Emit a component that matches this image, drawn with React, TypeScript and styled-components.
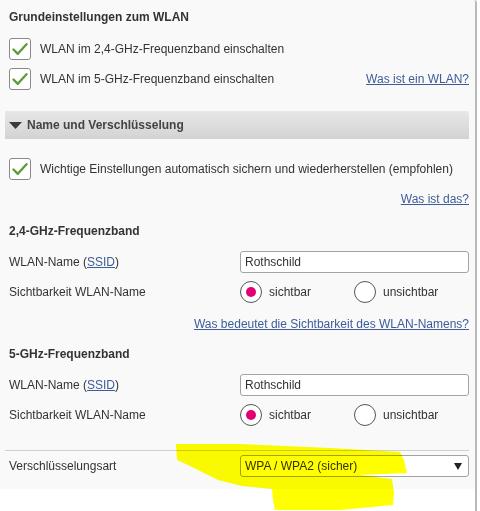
import React, { useState } from "react";
import styled, { createGlobalStyle } from "styled-components";

const GlobalStyle = createGlobalStyle`
  html, body {
    margin: 0;
    padding: 0;
    background: #ffffff;
  }
  body {
    font-family: "Liberation Sans", Arial, sans-serif;
    font-size: 12px;
    color: #333333;
  }
`;

const Page = styled.div`
  position: relative;
  width: 475px;
  height: 511px;
  border-right: 2px solid #b9b9b9;
  border-top-right-radius: 3px;
  overflow: hidden;
`;

const Panel = styled.div`
  background: #f9f9f9;
  padding: 0 6px 8px 5px;
  display: flex;
  flex-direction: column;
`;

const Title = styled.div`
  height: 34px;
  display: flex;
  align-items: center;
  padding-left: 4px;
  font-weight: bold;
`;

const CheckRow = styled.label<{ $top?: number }>`
  height: 30px;
  margin-top: ${({ $top }) => $top ?? 0}px;
  display: flex;
  align-items: center;
  padding-left: 4px;
  gap: 9px;
  cursor: pointer;
`;

const CheckBox = styled.span`
  width: 20px;
  height: 20px;
  border: 1px solid #8a8a8a;
  border-radius: 3px;
  background: #ffffff;
  display: flex;
  align-items: center;
  justify-content: center;
  flex-shrink: 0;
`;

const Spacer = styled.span`
  flex: 1;
`;

const Link = styled.a`
  color: #3d5c99;
  text-decoration: underline;
  cursor: pointer;
`;

const LinkRow = styled.div<{ $top?: number }>`
  height: 30px;
  margin-top: ${({ $top }) => $top ?? 0}px;
  display: flex;
  align-items: center;
  justify-content: flex-end;
`;

const SectionBar = styled.div`
  margin-top: 17px;
  height: 28px;
  display: flex;
  align-items: center;
  gap: 5px;
  padding-left: 4px;
  background: linear-gradient(#e7e7e7, #d3d3d3);
  border-top-right-radius: 3px;
  font-weight: bold;
  color: #444444;
`;

const SubHeading = styled.div<{ $top?: number }>`
  height: 30px;
  margin-top: ${({ $top }) => $top ?? 0}px;
  display: flex;
  align-items: center;
  padding-left: 4px;
  font-weight: bold;
`;

const FieldRow = styled.div<{ $top?: number }>`
  height: 30px;
  margin-top: ${({ $top }) => $top ?? 0}px;
  display: grid;
  grid-template-columns: 231px 1fr;
  align-items: center;
  padding-left: 4px;
`;

const TextInput = styled.input`
  box-sizing: border-box;
  width: 100%;
  height: 22px;
  border: 1px solid #a3a3a3;
  border-radius: 3px;
  background: #ffffff;
  padding: 0 4px;
  font-family: inherit;
  font-size: 12px;
  color: #333333;
  outline: none;
`;

const RadioGroup = styled.div`
  display: flex;
  align-items: center;
`;

const RadioOption = styled.label`
  width: 114px;
  display: flex;
  align-items: center;
  gap: 7px;
  cursor: pointer;
`;

const RadioCircle = styled.span<{ $checked: boolean }>`
  box-sizing: border-box;
  width: 22px;
  height: 22px;
  border: 1px solid #555555;
  border-radius: 50%;
  background: #ffffff;
  display: flex;
  align-items: center;
  justify-content: center;
  &::after {
    content: "";
    width: 10px;
    height: 10px;
    border-radius: 50%;
    background: ${({ $checked }) => ($checked ? "#e20074" : "transparent")};
  }
`;

const Separator = styled.div`
  margin-top: 20px;
  height: 1px;
  background: #cfcfcf;
`;

const SelectWrap = styled.div`
  position: relative;
  height: 22px;
`;

const Select = styled.select`
  box-sizing: border-box;
  width: 100%;
  height: 22px;
  appearance: none;
  border: 1px solid #a3a3a3;
  border-radius: 3px;
  background: #ffffff;
  padding: 0 4px;
  font-family: inherit;
  font-size: 12px;
  color: #333333;
  outline: none;
`;

const SelectArrow = styled.svg`
  position: absolute;
  right: 7px;
  top: 8px;
  pointer-events: none;
`;

const Highlighter = styled.svg`
  position: absolute;
  left: 0;
  top: 0;
  pointer-events: none;
  mix-blend-mode: multiply;
`;

const Check = () => (
  <svg width="16" height="14" viewBox="0 0 16 14">
    <path
      d="M1.5 7.5 L5.8 11.8 L14.5 2.2"
      fill="none"
      stroke="#5e9e3a"
      strokeWidth="2.4"
      strokeLinecap="round"
      strokeLinejoin="round"
    />
  </svg>
);

const Triangle = () => (
  <svg width="13" height="7" viewBox="0 0 13 7">
    <path d="M0 0 H13 L6.5 7 Z" fill="#3a3a3a" />
  </svg>
);

type Band = { title: string; ssid: string; top: number };

const BandBlock: React.FC<{ band: Band; withLink?: boolean }> = ({ band, withLink }) => {
  const [visible, setVisible] = useState(true);
  return (
    <>
      <SubHeading $top={band.top}>{band.title}</SubHeading>
      <FieldRow $top={1}>
        <span>
          WLAN-Name (<Link>SSID</Link>)
        </span>
        <TextInput defaultValue={band.ssid} />
      </FieldRow>
      <FieldRow>
        <span>Sichtbarkeit WLAN-Name</span>
        <RadioGroup>
          <RadioOption onClick={() => setVisible(true)}>
            <RadioCircle $checked={visible} />
            sichtbar
          </RadioOption>
          <RadioOption onClick={() => setVisible(false)}>
            <RadioCircle $checked={!visible} />
            unsichtbar
          </RadioOption>
        </RadioGroup>
      </FieldRow>
      {withLink && (
        <LinkRow $top={2}>
          <Link>Was bedeutet die Sichtbarkeit des WLAN-Namens?</Link>
        </LinkRow>
      )}
    </>
  );
};

export default function App() {
  return (
    <Page>
      <GlobalStyle />
      <Panel>
        <Title>Grundeinstellungen zum WLAN</Title>
        <CheckRow>
          <CheckBox>
            <Check />
          </CheckBox>
          WLAN im 2,4-GHz-Frequenzband einschalten
        </CheckRow>
        <CheckRow>
          <CheckBox>
            <Check />
          </CheckBox>
          WLAN im 5-GHz-Frequenzband einschalten
          <Spacer />
          <Link>Was ist ein WLAN?</Link>
        </CheckRow>

        <SectionBar>
          <Triangle />
          Name und Verschlüsselung
        </SectionBar>

        <CheckRow $top={15}>
          <CheckBox>
            <Check />
          </CheckBox>
          Wichtige Einstellungen automatisch sichern und wiederherstellen (empfohlen)
        </CheckRow>
        <LinkRow>
          <Link>Was ist das?</Link>
        </LinkRow>

        <BandBlock band={{ title: "2,4-GHz-Frequenzband", ssid: "Rothschild", top: 2 }} withLink />
        <BandBlock band={{ title: "5-GHz-Frequenzband", ssid: "Rothschild", top: 0 }} />

        <Separator />
        <FieldRow>
          <span>Verschlüsselungsart</span>
          <SelectWrap>
            <Select defaultValue="wpa">
              <option value="wpa">WPA / WPA2 (sicher)</option>
            </Select>
            <SelectArrow width="8" height="7" viewBox="0 0 8 7">
              <path d="M0 0 H8 L4 7 Z" fill="#222222" />
            </SelectArrow>
          </SelectWrap>
        </FieldRow>
      </Panel>

      <Highlighter width="480" height="511" viewBox="0 0 480 511">
        <path
          d="M176 444 L240 444 L330 448 L400 452 L404 460 L407 473 L360 475 L392 479 L394 493 L393 505 L340 510 L275 510 L273 500 L272 489 L242 486 L218 480 L202 472 L188 465 L177 460 Z"
          fill="#ffff00"
        />
      </Highlighter>
    </Page>
  );
}
